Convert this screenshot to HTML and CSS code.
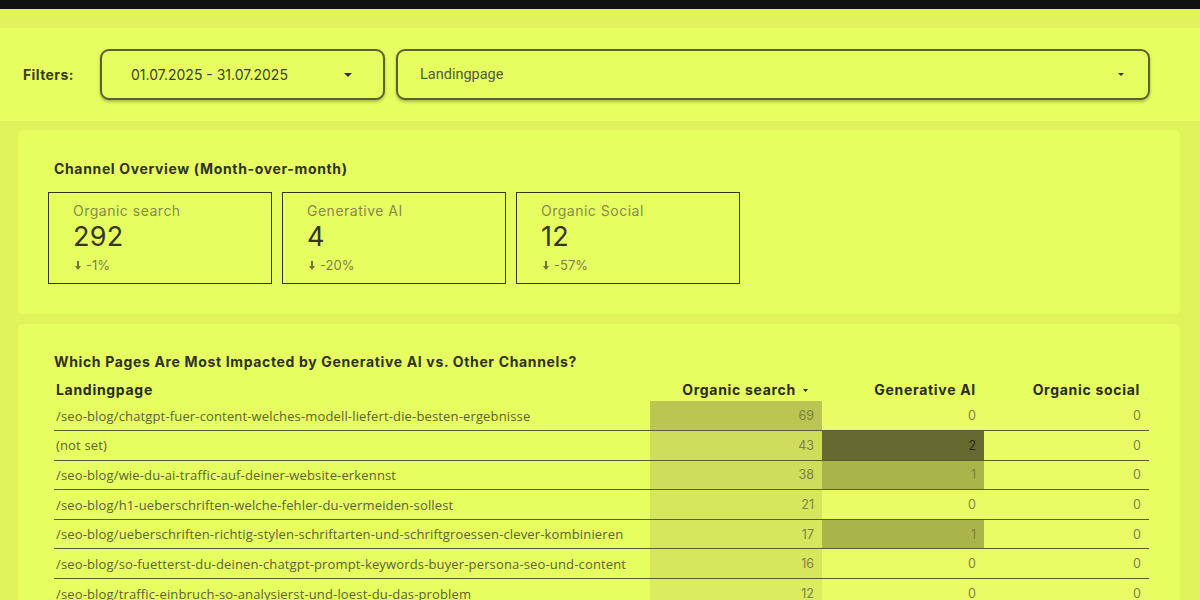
FILE: index.html
```html
<!DOCTYPE html>
<html lang="de">
<head>
<meta charset="utf-8">
<title>Channel Report</title>
<link rel="stylesheet" href="styles.css">
</head>
<body>
<div class="topbar"></div>
<div class="filterbar">
  <div class="filter-label">Filters:</div>
  <div class="dropdown date">
    <span class="dd-text">01.07.2025 - 31.07.2025</span>
    <svg class="caret" width="8" height="4" viewBox="0 0 8 4"><path d="M0 0h8L4 4z" fill="#333"/></svg>
  </div>
  <div class="dropdown page">
    <span class="dd-text roboto">Landingpage</span>
    <svg class="caret small" width="6" height="3" viewBox="0 0 6 3"><path d="M0 0h6L3 3z" fill="#333"/></svg>
  </div>
</div>
<main class="content">
  <section class="card overview">
    <h2 class="card-title">Channel Overview (Month-over-month)</h2>
    <div class="kpis">
      <div class="kpi">
        <div class="kpi-label">Organic search</div>
        <div class="kpi-value">292</div>
        <div class="kpi-delta"><svg width="6" height="9" viewBox="0 0 6 9"><path d="M2 0h2v5h2L3 9 0 5h2z" fill="#6f7440"/></svg>-1%</div>
      </div>
      <div class="kpi">
        <div class="kpi-label">Generative AI</div>
        <div class="kpi-value">4</div>
        <div class="kpi-delta"><svg width="6" height="9" viewBox="0 0 6 9"><path d="M2 0h2v5h2L3 9 0 5h2z" fill="#6f7440"/></svg>-20%</div>
      </div>
      <div class="kpi">
        <div class="kpi-label">Organic Social</div>
        <div class="kpi-value">12</div>
        <div class="kpi-delta"><svg width="6" height="9" viewBox="0 0 6 9"><path d="M2 0h2v5h2L3 9 0 5h2z" fill="#6f7440"/></svg>-57%</div>
      </div>
    </div>
  </section>
  <section class="card pages">
    <h2 class="card-title">Which Pages Are Most Impacted by Generative AI vs. Other Channels?</h2>
    <table class="tbl">
      <thead>
        <tr>
          <th class="c-page">Landingpage</th>
          <th class="c-num c-os">Organic search <svg width="5" height="3" viewBox="0 0 5 3"><path d="M0 0h5L2.5 3z" fill="#222"/></svg></th>
          <th class="c-num c-ai">Generative AI</th>
          <th class="c-num c-soc">Organic social</th>
        </tr>
      </thead>
      <tbody>
        <tr><td class="c-page">/seo-blog/chatgpt-fuer-content-welches-modell-liefert-die-besten-ergebnisse</td><td class="c-num h-os1">69</td><td class="c-num blank">0</td><td class="c-num blank">0</td></tr>
        <tr><td class="c-page">(not set)</td><td class="c-num h-os2">43</td><td class="c-num h-ai2">2</td><td class="c-num blank">0</td></tr>
        <tr><td class="c-page">/seo-blog/wie-du-ai-traffic-auf-deiner-website-erkennst</td><td class="c-num h-os2">38</td><td class="c-num h-ai1">1</td><td class="c-num blank">0</td></tr>
        <tr><td class="c-page">/seo-blog/h1-ueberschriften-welche-fehler-du-vermeiden-sollest</td><td class="c-num h-os3">21</td><td class="c-num blank">0</td><td class="c-num blank">0</td></tr>
        <tr><td class="c-page">/seo-blog/ueberschriften-richtig-stylen-schriftarten-und-schriftgroessen-clever-kombinieren</td><td class="c-num h-os3">17</td><td class="c-num h-ai1">1</td><td class="c-num blank">0</td></tr>
        <tr><td class="c-page">/seo-blog/so-fuetterst-du-deinen-chatgpt-prompt-keywords-buyer-persona-seo-und-content</td><td class="c-num h-os3">16</td><td class="c-num blank">0</td><td class="c-num blank">0</td></tr>
        <tr><td class="c-page">/seo-blog/traffic-einbruch-so-analysierst-und-loest-du-das-problem</td><td class="c-num h-os4">12</td><td class="c-num blank">0</td><td class="c-num blank">0</td></tr>
      </tbody>
    </table>
  </section>
</main>
</body>
</html>
```

FILE: styles.css
```css
* { box-sizing: border-box; }
html, body { margin: 0; padding: 0; }
body {
  width: 1200px;
  height: 600px;
  overflow: hidden;
  background: #e0f35b;
  font-family: "Inter", "Open Sans", sans-serif;
  color: #2e2f1c;
}
.topbar { height: 9px; background: #111111; }
.filterbar {
  margin-top: 19px;
  height: 93px;
  background: #e6fe5f;
  display: flex;
  align-items: center;
  padding-left: 23px;
}
.filter-label {
  width: 77px;
  font-size: 14px;
  font-weight: 700;
  letter-spacing: 0.4px;
  color: #3a3b26;
}
.dropdown {
  height: 51px;
  border: 2px solid #5c5e33;
  border-radius: 9px;
  box-shadow: 0 2px 3px rgba(60, 62, 20, 0.35);
  display: flex;
  align-items: center;
  justify-content: space-between;
  background: #e6fe5f;
}
.dropdown.date { width: 285px; padding: 0 31px 0 29px; }
.dropdown.page { width: 754px; margin-left: 11px; padding: 0 24px 0 22px; }
.dd-text { font-size: 14px; color: #3d3f25; }
.dd-text.roboto { font-family: "Roboto", sans-serif; font-size: 14.5px; color: #55583a; }
.caret { display: block; }

.content {
  padding: 9px 20px 0 18px;
  display: flex;
  flex-direction: column;
  gap: 10px;
}
.card {
  background: #e6fe5f;
  border-radius: 5px;
}
.card-title {
  margin: 0;
  font-size: 14px;
  font-weight: 700;
  letter-spacing: 0.65px;
  color: #303120;
  line-height: 18px;
}
.overview { height: 184px; padding: 30px 30px 0 30px; }
.overview .card-title { margin-left: 6px; }
.kpis { display: flex; gap: 10px; margin-top: 14px; }
.kpi {
  width: 224px;
  height: 92px;
  border: 1px solid #35361f;
  padding: 9px 0 0 24px;
}
.kpi-label { font-size: 14px; line-height: 18px; letter-spacing: 0.5px; color: #868b4b; }
.kpi-value { font-size: 27px; line-height: 30px; color: #35361f; margin-top: 2px; letter-spacing: 0.3px; }
.kpi-delta {
  font-size: 13px;
  line-height: 16px;
  color: #7b8046;
  display: flex;
  align-items: center;
  gap: 5px;
  margin-top: 5px;
  padding-left: 2px;
}
.pages { height: 300px; padding: 29px 31px 0 36px; }
.tbl {
  margin-top: 7px;
  width: 1095px;
  border-collapse: collapse;
  table-layout: fixed;
}
.tbl th {
  font-size: 14px;
  font-weight: 700;
  letter-spacing: 0.7px;
  color: #2a2b1a;
  height: 23px;
  padding: 0 8px 1px 2px;
  white-space: nowrap;
}
.tbl th.c-page { text-align: left; }
.tbl th.c-num { text-align: right; }
.tbl th.c-os { padding-right: 14px; }
.tbl th.c-os svg { margin-left: 3px; vertical-align: middle; }
.tbl th.c-soc { padding-right: 9px; }
.c-page { width: 596px; }
.c-os { width: 172px; }
.c-ai { width: 162px; }
.c-soc { width: 165px; }
.tbl td {
  height: 29.6px;
  font-size: 12.5px;
  white-space: nowrap;
  overflow: hidden;
  padding: 0;
}
.tbl tbody tr + tr td { border-top: 1px solid #5a5d30; }
.tbl td.c-page { padding-left: 2px; color: #5e6139; font-family: "Open Sans", sans-serif; font-size: 13px; letter-spacing: 0.15px; }
.tbl td.c-num { text-align: right; padding-right: 8px; color: #7c8148; }
.blank { background: #e9fc66; }
.h-os1 { background: #bac552; }
.h-os2 { background: #cedd5c; }
.h-os3 { background: #d6e75e; }
.h-os4 { background: #dbec5f; }
.h-ai2 { background: #656a30; color: #2a2b15 !important; }
.h-ai1 { background: #a9b54a; }
```
